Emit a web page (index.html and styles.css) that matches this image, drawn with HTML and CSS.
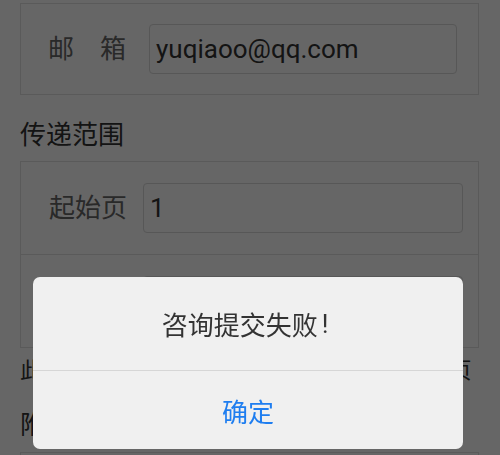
FILE: index.html
```html
<!DOCTYPE html>
<html lang="zh-CN">
<head>
<meta charset="utf-8">
<title>文献传递</title>
<link rel="stylesheet" href="styles.css">
</head>
<body>
<div class="page">
  <div class="box">
    <div class="row row-mail">
      <span class="label">邮　箱</span>
      <div class="input">yuqiaoo@qq.com</div>
    </div>
  </div>

  <div class="section-title">传递范围</div>
  <div class="box">
    <div class="row row-range">
      <span class="label">起始页</span>
      <div class="input">1</div>
    </div>
    <div class="row row-range row-split">
      <span class="label">结束页</span>
      <div class="input"></div>
    </div>
  </div>
  <div class="note">此处如不填写，则默认传递该篇文献的全部页</div>

  <div class="section-title section-title-2">附件</div>
  <div class="box box-attach"></div>
</div>

<div class="overlay"></div>
<div class="dialog">
  <div class="dialog-msg">咨询提交失败<span class="bang">!</span></div>
  <div class="dialog-btn">确定</div>
</div>
</body>
</html>
```

FILE: styles.css
```css
body {
  margin: 0;
  background: #ffffff;
  font-family: Roboto, "Noto Sans CJK SC", sans-serif;
  color: #333333;
  overflow: hidden;
}

.page {
  padding: 3px 21px 0 20px;
}

.box {
  border: 1px solid #e1e1e1;
}

.box-attach {
  height: 92px;
}

.row {
  display: flex;
  align-items: center;
}

.row-mail {
  padding: 20px 21px 20px 27px;
}

.row-mail .label {
  margin-right: 23px;
}

.row-range {
  padding: 21px 15px 21px 28px;
}

.row-range .label {
  margin-right: 16px;
}

.row-split {
  border-top: 1px solid #e1e1e1;
}

.label {
  flex: none;
  width: 78px;
  font-size: 26px;
  line-height: 36px;
  color: #666666;
  white-space: nowrap;
}

.input {
  flex: 1;
  display: flex;
  align-items: center;
  box-sizing: border-box;
  height: 50px;
  padding: 0 6px;
  border: 1px solid #d9d9d9;
  border-radius: 4px;
  font-size: 26px;
  color: #333333;
}

.section-title {
  margin: 22px 0 8px;
  font-size: 26px;
  line-height: 36px;
  color: #333333;
}

.section-title-2 {
  margin: 20px 0 9px;
}

.note {
  margin-top: 7px;
  font-size: 22px;
  line-height: 32px;
  letter-spacing: 0.6px;
  white-space: nowrap;
  color: #333333;
}

.overlay {
  position: fixed;
  inset: 0;
  background: rgba(0, 0, 0, 0.6);
}

.dialog {
  position: fixed;
  left: 33px;
  top: 277px;
  width: 430px;
  height: 172px;
  background: #f0f0f0;
  border-radius: 7px;
  display: flex;
  flex-direction: column;
  overflow: hidden;
}

.dialog-msg {
  height: 93px;
  display: flex;
  align-items: center;
  justify-content: center;
  padding-right: 6px;
  font-size: 26px;
  color: #333333;
  border-bottom: 1px solid #d6d6d6;
}

.bang {
  margin-left: 4px;
}

.dialog-btn {
  flex: 1;
  display: flex;
  align-items: center;
  justify-content: center;
  font-size: 26px;
  color: #1f7ef0;
}
```
